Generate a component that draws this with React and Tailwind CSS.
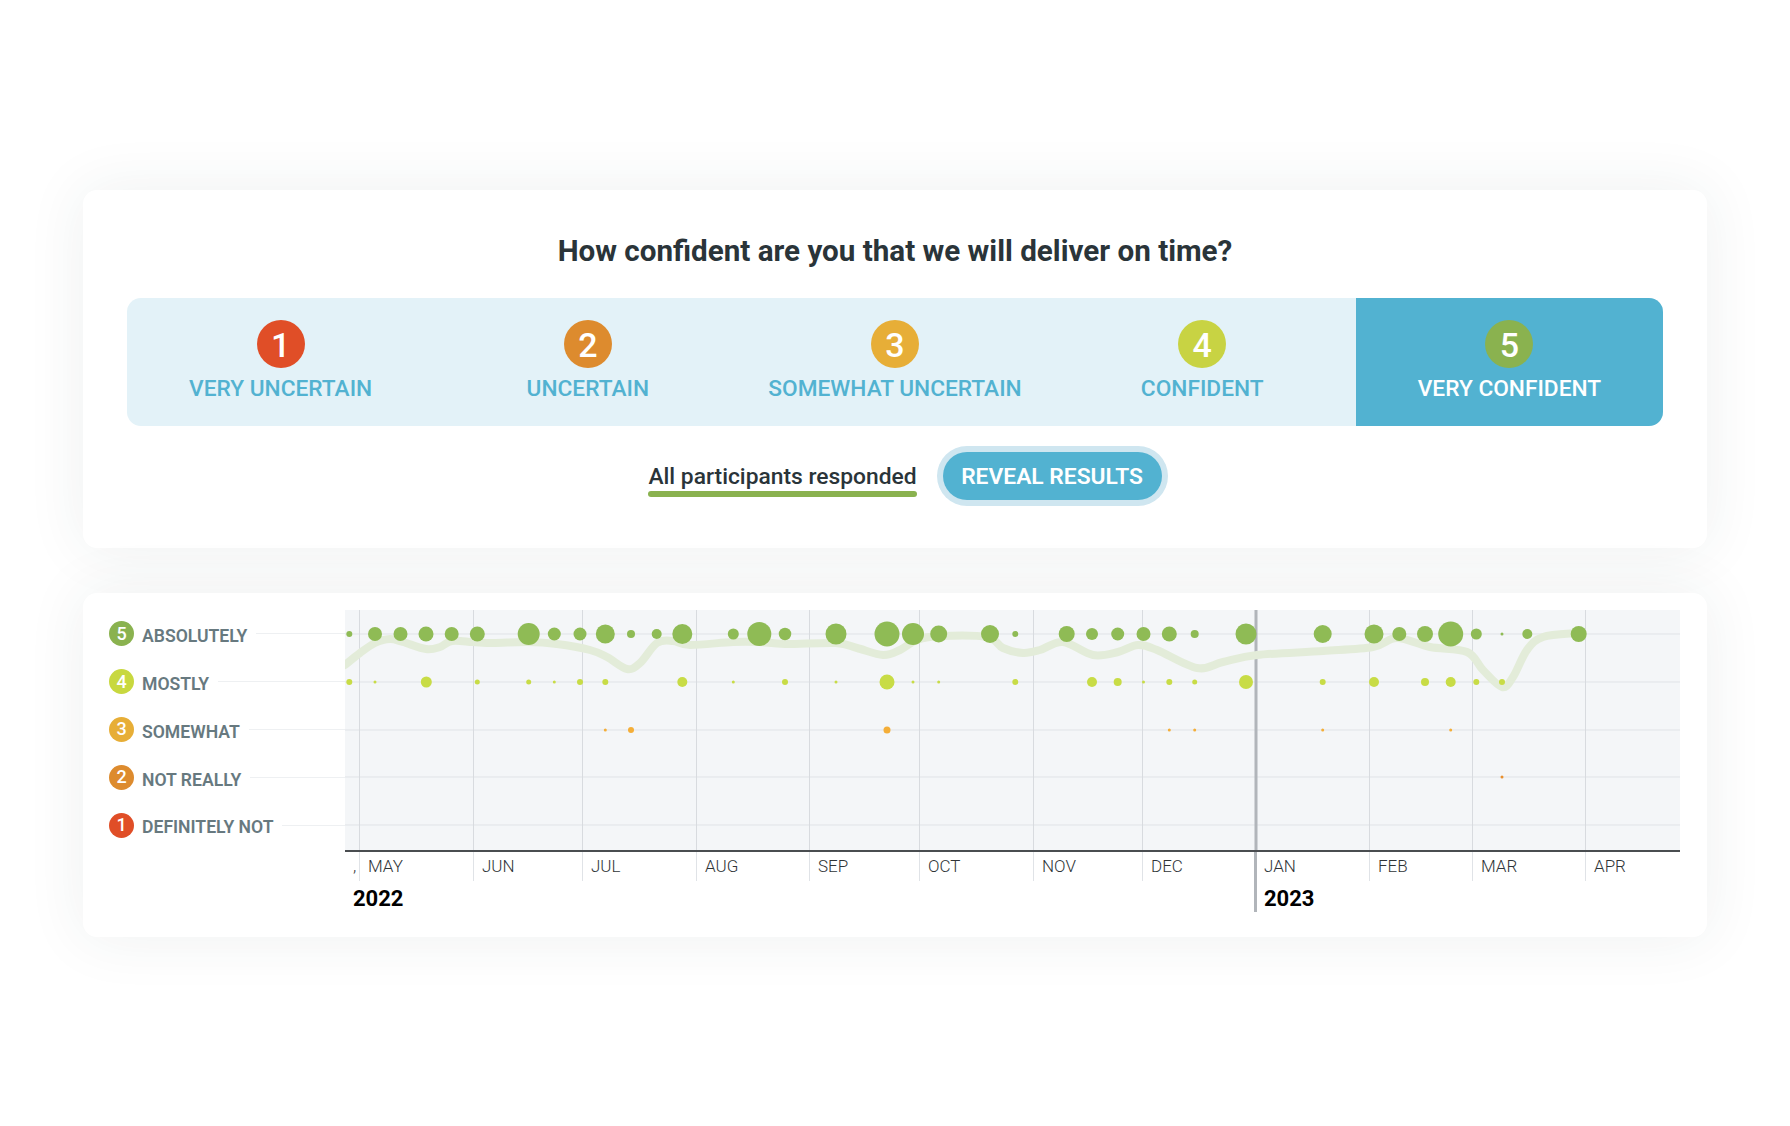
import React from 'react';

const options = [
    { n: 1, label: 'VERY UNCERTAIN', color: 'bg-[#e04e27]' },
    { n: 2, label: 'UNCERTAIN', color: 'bg-[#dd8b2e]' },
    { n: 3, label: 'SOMEWHAT UNCERTAIN', color: 'bg-[#e7ae37]' },
    { n: 4, label: 'CONFIDENT', color: 'bg-[#c8d343]' },
    { n: 5, label: 'VERY CONFIDENT', color: 'bg-[#8ab24f]', active: true },
];

const legend = [
    { n: 5, label: 'ABSOLUTELY', color: 'bg-[#8ab24f]' },
    { n: 4, label: 'MOSTLY', color: 'bg-[#c8d83f]' },
    { n: 3, label: 'SOMEWHAT', color: 'bg-[#e7ae37]' },
    { n: 2, label: 'NOT REALLY', color: 'bg-[#dd8b2e]' },
    { n: 1, label: 'DEFINITELY NOT', color: 'bg-[#e04e27]' },
];

const months = [
    { label: 'MAY', w: 'w-[114px]' },
    { label: 'JUN', w: 'w-[109px]' },
    { label: 'JUL', w: 'w-[114px]' },
    { label: 'AUG', w: 'w-[113px]' },
    { label: 'SEP', w: 'w-[110px]' },
    { label: 'OCT', w: 'w-[114px]' },
    { label: 'NOV', w: 'w-[109px]' },
    { label: 'DEC', w: 'w-[112px]' },
    { label: 'JAN', w: 'w-[115px]', strong: true },
    { label: 'FEB', w: 'w-[103px]' },
    { label: 'MAR', w: 'w-[113px]' },
    { label: 'APR', w: 'w-[95px]' },
];

const rowY = [634, 682, 730, 777, 825];
const gridX = [359, 473, 582, 696, 809, 919, 1033, 1142, 1369, 1472, 1585];

// [x, diameter]
const dots5 = [
    [349.3, 6], [375, 14], [400.5, 14], [426, 15], [451.7, 14], [477.3, 15], [528.7, 22], [554.3, 13],
    [580, 13], [605.3, 19], [631, 8], [656.7, 10], [682.3, 20], [733.3, 11], [759.3, 24], [785, 12.5],
    [836, 21], [887, 25], [913, 22], [938.7, 17], [990, 18], [1015.3, 6], [1066.7, 16], [1092, 12],
    [1117.7, 13], [1143.5, 14], [1169.3, 15], [1194.7, 8], [1246, 21], [1322.7, 18], [1374, 19],
    [1399.3, 14], [1425, 16], [1450.7, 25], [1476.3, 11], [1502, 3], [1527.3, 10], [1578.7, 16],
];
const dots4 = [
    [349.3, 6], [375, 3], [426.3, 11], [477.3, 5], [528.7, 5], [554.3, 3], [580, 6], [605.3, 6],
    [682.3, 10], [733.3, 3], [785, 6], [836, 3], [887, 15], [913, 3], [938.7, 3], [1015.3, 6],
    [1092, 10], [1117.7, 8], [1143.5, 3], [1169.3, 6], [1194.7, 5], [1246, 14], [1322.7, 6],
    [1374, 10], [1425, 8], [1450.7, 10], [1476.3, 6], [1502, 6],
];
const dots3 = [[605.3, 3], [631, 6], [887, 7], [1169.3, 3], [1194.7, 3], [1322.7, 3], [1450.7, 3]];
const dots2 = [[1502, 3]];

const trend = [
    [345, 665], [360, 653], [375, 643], [390, 639], [403, 642], [426, 649], [440, 647], [452, 641],
    [473, 642], [493, 643], [527, 642], [557, 644], [590, 650], [607, 657], [627, 669], [640, 663],
    [657, 643], [673, 641], [690, 645], [733, 642], [759, 642], [785, 644], [836, 643], [857, 648],
    [883, 655], [900, 650], [917, 640], [940, 636], [987, 637], [1003, 648], [1023, 653], [1040, 650],
    [1063, 642], [1093, 655], [1118, 652], [1138, 645], [1157, 650], [1197, 668], [1223, 662],
    [1257, 655], [1323, 651], [1373, 647], [1397, 638], [1430, 647], [1467, 652], [1483, 670],
    [1502, 687], [1513, 677], [1527, 650], [1543, 637], [1577, 633],
];

const smoothPath = (pts) => {
    let d = `M${pts[0][0]} ${pts[0][1]}`;
    for (let i = 0; i < pts.length - 1; i++) {
        const p0 = pts[i - 1] || pts[i];
        const p1 = pts[i];
        const p2 = pts[i + 1];
        const p3 = pts[i + 2] || p2;
        const c1x = p1[0] + (p2[0] - p0[0]) / 6;
        const c1y = p1[1] + (p2[1] - p0[1]) / 6;
        const c2x = p2[0] - (p3[0] - p1[0]) / 6;
        const c2y = p2[1] - (p3[1] - p1[1]) / 6;
        d += ` C${c1x} ${c1y} ${c2x} ${c2y} ${p2[0]} ${p2[1]}`;
    }
    return d;
};

function Plot() {
    return (
        <svg viewBox="345 610 1335 240" className="block h-[240px] w-[1335px] bg-[#f4f6f8]">
            {rowY.map((y) => (
                <line key={y} x1="345" x2="1680" y1={y} y2={y} stroke="#e0e3e7" strokeWidth="1" />
            ))}
            {gridX.map((x) => (
                <line key={x} x1={x + 0.5} x2={x + 0.5} y1="610" y2="850" stroke="#d8dbdf" strokeWidth="1" />
            ))}
            <line x1="1256" x2="1256" y1="610" y2="850" stroke="#b1b5ba" strokeWidth="3" />
            <path d={smoothPath(trend)} fill="none" stroke="#e3ecd9" strokeWidth="8" strokeLinecap="round" />
            {dots5.map(([x, d]) => <circle key={x} cx={x} cy={634} r={d / 2} fill="#8fbb55" />)}
            {dots4.map(([x, d]) => <circle key={x} cx={x} cy={682} r={d / 2} fill="#c8dc46" />)}
            {dots3.map(([x, d]) => <circle key={x} cx={x} cy={730} r={d / 2} fill="#f4ae38" />)}
            {dots2.map(([x, d]) => <circle key={x} cx={x} cy={777} r={d / 2} fill="#e98f2c" />)}
        </svg>
    );
}

export default function App() {
    return (
        <div className="min-h-[1126px] bg-white px-[83px] pt-[190px] font-['Roboto',sans-serif]">
            <div className="w-[1624px] rounded-[14px] bg-white px-[44px] pt-[39px] pb-[48px] shadow-[0_0_60px_rgba(40,60,70,0.08)]">
                <h1 className="mb-[25px] text-center text-[29.6px] leading-[44px] font-bold text-[#2a3439]">
                    How confident are you that we will deliver on time?
                </h1>
                <div className="flex h-[128px] overflow-hidden rounded-[14px] bg-[#e3f2f8]">
                    {options.map((o) => (
                        <div
                            key={o.n}
                            className={`flex flex-1 flex-col items-center pt-[22px] ${o.active ? 'bg-[#52b2d1] text-white' : 'text-[#52b2d1]'}`}
                        >
                            <div className={`flex h-[48px] w-[48px] items-center justify-center rounded-full pt-[2px] text-[34px] font-medium text-white ${o.color}`}>
                                {o.n}
                            </div>
                            <div className="mt-[7px] text-[22.7px] leading-[28px] font-medium">{o.label}</div>
                        </div>
                    ))}
                </div>
                <div className="mt-[26px] flex h-[48px] items-center justify-center gap-[26px] pl-[20px]">
                    <div className="flex flex-col pt-[11px]">
                        <span className="text-[22.8px] leading-[22px] font-medium text-[#2a3439]">All participants responded</span>
                        <span className="mt-[3px] h-[6px] rounded-full bg-[#8ab24f]"></span>
                    </div>
                    <button
                        type="button"
                        className="flex h-[48px] w-[219px] items-center justify-center rounded-full bg-[#52b2d1] pt-[2px] text-[22.8px] font-semibold text-white shadow-[0_0_0_6px_#cfe6f0]"
                    >
                        REVEAL RESULTS
                    </button>
                </div>
            </div>

            <div className="mt-[45px] flex w-[1624px] rounded-[14px] bg-white px-[26px] pt-[17px] pb-[25px] shadow-[0_0_60px_rgba(40,60,70,0.08)]">
                <div className="w-[236px]">
                    {legend.map((l) => (
                        <div key={l.n} className="flex h-[47.8px] items-center">
                            <div className={`flex h-[25px] w-[25px] shrink-0 items-center justify-center rounded-full pb-[1px] text-[18px] font-medium text-white ${l.color}`}>
                                {l.n}
                            </div>
                            <span className="mt-[5px] ml-[8px] text-[17.6px] font-semibold whitespace-nowrap text-[#67797f]">{l.label}</span>
                            <span className="ml-[9px] h-px flex-1 bg-[#eef0f2]"></span>
                        </div>
                    ))}
                </div>
                <div className="w-[1335px]">
                    <div className="border-b-2 border-[#4a4d50]">
                        <Plot />
                    </div>
                    <div className="flex h-[29px] text-[17px] leading-[29px] font-light text-[#2f3437]">
                        <div className="w-[14px] pl-[8px]">,</div>
                        {months.map((m) => (
                            <div
                                key={m.label}
                                className={m.strong ? `${m.w} border-l-[3px] border-[#b1b5ba] pl-[7px]` : `${m.w} border-l border-[#e0e3e7] pl-[8px]`}
                            >
                                {m.label}
                            </div>
                        ))}
                    </div>
                    <div className="flex h-[31px] text-[22px] font-bold text-black">
                        <div className="w-[909px] pt-[3px] pl-[8px] leading-[30px]">2022</div>
                        <div className="border-l-[3px] border-[#b1b5ba] pt-[3px] pl-[7px] leading-[30px]">2023</div>
                    </div>
                </div>
            </div>
        </div>
    );
}
